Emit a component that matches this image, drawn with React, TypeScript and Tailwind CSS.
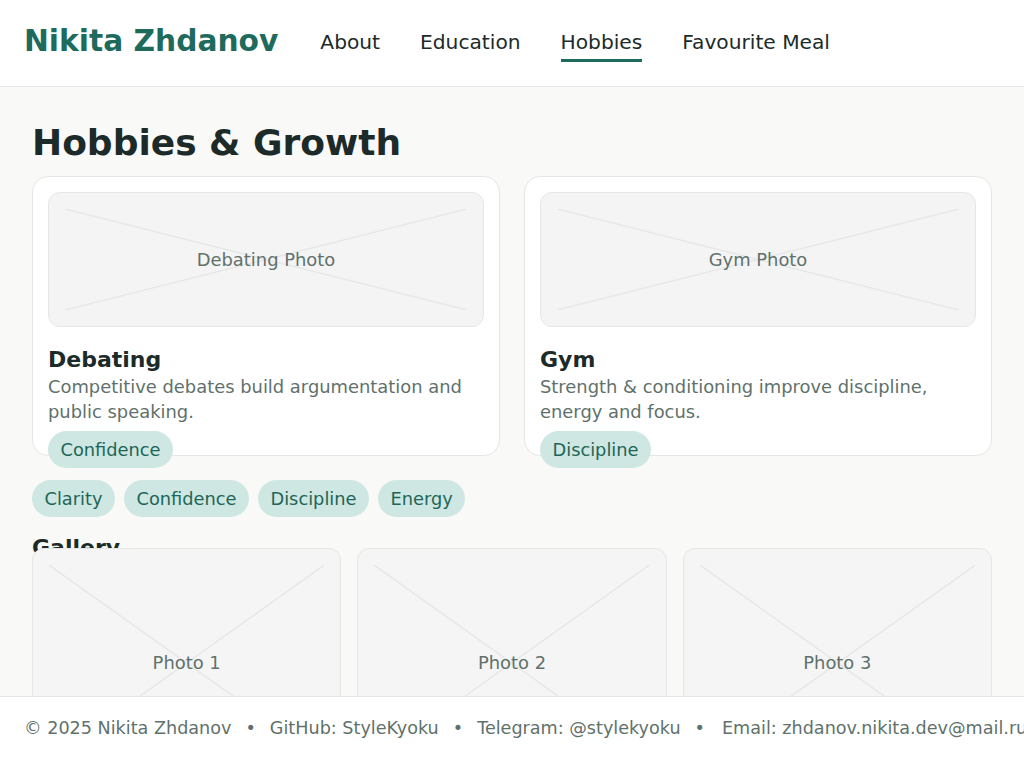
const font = "font-['DejaVu_Sans',sans-serif]";

function Cross() {
  return (
    <svg
      className="absolute inset-4 w-[calc(100%-32px)] h-[calc(100%-32px)]"
      viewBox="0 0 100 100"
      preserveAspectRatio="none"
    >
      <line x1="0" y1="0" x2="100" y2="100" stroke="#e6e8e7" strokeWidth="1.5" vectorEffect="non-scaling-stroke" />
      <line x1="100" y1="0" x2="0" y2="100" stroke="#e6e8e7" strokeWidth="1.5" vectorEffect="non-scaling-stroke" />
    </svg>
  );
}

function Pill({ label }: { label: string }) {
  return (
    <span className="inline-block rounded-full bg-[#cfe7e2] px-[12.5px] py-[5px] text-[17.8px] leading-[27px] text-[#1c6657]">
      {label}
    </span>
  );
}

const hobbies = [
  {
    title: "Debating",
    photo: "Debating Photo",
    text: "Competitive debates build argumentation and public speaking.",
    tag: "Confidence",
  },
  {
    title: "Gym",
    photo: "Gym Photo",
    text: "Strength & conditioning improve discipline, energy and focus.",
    tag: "Discipline",
  },
];

const nav = ["About", "Education", "Hobbies", "Favourite Meal"];

export default function App() {
  return (
    <div className={`${font} min-h-screen bg-[#f9f9f7] text-[#1c2b2a]`}>
      {/* Header */}
      <header className="flex h-[87px] items-start gap-[42px] border-b border-[#e6e6e4] bg-white px-6 pt-[23px]">
        <div className="text-[29.7px] font-bold leading-[36px] text-[#1e6b5e]">Nikita Zhdanov</div>
        <nav className="mt-[7px] flex gap-10">
          {nav.map((item) => (
            <a
              key={item}
              href="#"
              className={
                item === "Hobbies"
                  ? "border-b-[3px] border-[#1e6b5e] pb-[5px] text-[20.2px] leading-[24px] text-[#1c2b2a]"
                  : "border-b-[3px] border-transparent pb-[5px] text-[20.2px] leading-[24px] text-[#1c2b2a]"
              }
            >
              {item}
            </a>
          ))}
        </nav>
      </header>

      {/* Main */}
      <main className="px-8 pt-[34px] pb-24">
        <h1 className="mb-[12px] text-[36px] font-bold leading-[43px]">Hobbies &amp; Growth</h1>

        <div className="grid grid-cols-2 gap-6">
          {hobbies.map((h) => (
            <div key={h.title} className="h-[280px] rounded-2xl border border-[#e6e6e4] bg-white p-[15px]">
              <div className="relative flex h-[135px] items-center justify-center rounded-xl border border-[#e6e6e4] bg-[#f4f4f4] pt-[2px]">
                <Cross />
                <span className="relative text-[17.9px] text-[#5f716c]">{h.photo}</span>
              </div>
              <h3 className="mt-[19px] text-[22px] font-bold leading-[28px]">{h.title}</h3>
              <p className="text-[17.9px] leading-[25px] text-[#5f716c]">{h.text}</p>
              <div className="mt-[7px]">
                <Pill label={h.tag} />
              </div>
            </div>
          ))}
        </div>

        <div className="mt-6 flex gap-[9px]">
          {["Clarity", "Confidence", "Discipline", "Energy"].map((t) => (
            <Pill key={t} label={t} />
          ))}
        </div>

        <h2 className="mt-[17px] h-[14px] text-[22px] font-bold leading-[28px]">Gallery</h2>

        <div className="grid grid-cols-3 gap-4">
          {["Photo 1", "Photo 2", "Photo 3"].map((p) => (
            <div
              key={p}
              className="relative flex h-[230px] items-center justify-center rounded-xl border border-[#e6e6e4] bg-[#f5f5f5]"
            >
              <Cross />
              <span className="relative text-[17.9px] text-[#5f716c]">{p}</span>
            </div>
          ))}
        </div>
      </main>

      {/* Footer */}
      <footer className="fixed inset-x-0 bottom-0 flex h-[72px] items-start gap-[14px] overflow-hidden whitespace-nowrap border-t border-[#e6e6e4] bg-white px-6 pt-[21px] text-[17.6px] leading-[21px] text-[#5f716c]">
        <span>© 2025 Nikita Zhdanov</span>
        <span>•</span>
        <span>GitHub: StyleKyoku</span>
        <span>•</span>
        <span>Telegram: @stylekyoku</span>
        <span>•</span>
        <span className="ml-[3px]">Email: zhdanov.nikita.dev@mail.ru</span>
      </footer>
    </div>
  );
}
